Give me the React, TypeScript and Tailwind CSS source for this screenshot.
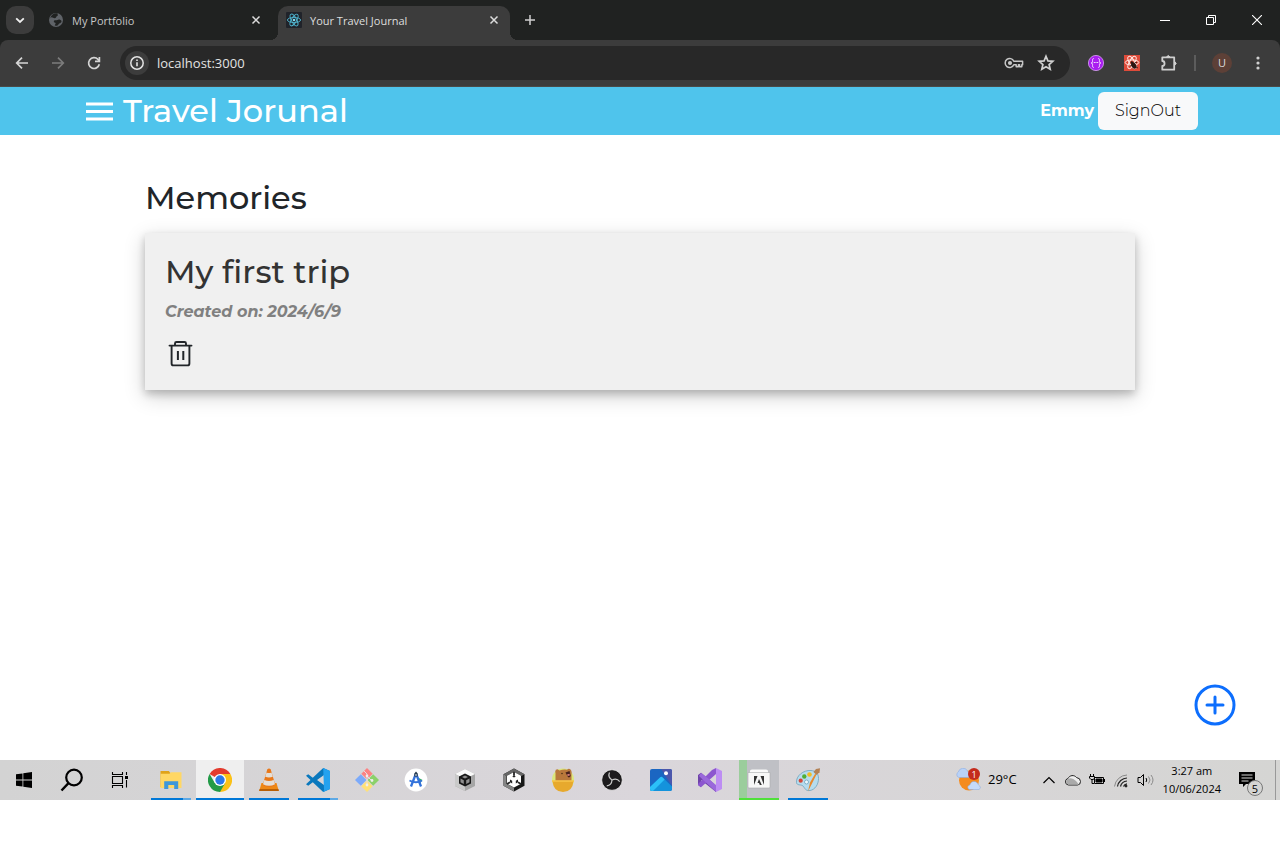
import React from "react";

type IconProps = { className?: string };

const GlobeIcon = () => (
  <svg viewBox="0 0 16 16" className="size-4 shrink-0">
    <circle cx="8" cy="8" r="7" fill="#5f6368" />
    <path d="M2.2 6.2C4 4 5 6.500 7 6.200 8.500 6 8 4.200 9.600 3.800 10.500 3.500 9 2 9.800 1.400A7 7 0 0 0 2.200 6.200ZM7.500 8.300c2 0 2.400-1.200 4-.8s2.500 1.600 1.800 2.800-2 .6-2.600 1.700-1.700 2.500-3.700 1.500c-.8-.5 1-1.500.6-2.500-.3-.8-1.800-.3-1.800-1.300s.7-1.400 1.700-1.400Z" fill="#202221" />
  </svg>
);

const ReactIcon = () => (
  <svg viewBox="0 0 16 16" className="size-4 shrink-0">
    <rect width="16" height="16" rx="1" fill="#20232a" />
    <g fill="none" stroke="#4fb5cf" strokeWidth="0.900">
      <ellipse cx="8" cy="8" rx="6.600" ry="2.600" />
      <ellipse cx="8" cy="8" rx="6.600" ry="2.600" transform="rotate(60 8 8)" />
      <ellipse cx="8" cy="8" rx="6.600" ry="2.600" transform="rotate(120 8 8)" />
    </g>
    <circle cx="8" cy="8" r="1.300" fill="#7fdcf2" />
  </svg>
);

const CloseIcon = () => (
  <svg viewBox="0 0 16 16" className="size-4" fill="none" stroke="#dcdcdc" strokeWidth="1.500">
    <path d="M4.500 4.500l7 7M11.500 4.500l-7 7" />
  </svg>
);

const ArrowIcon = ({ className = "" }: IconProps) => (
  <svg viewBox="0 0 16 16" className={"size-4 " + className} fill="none" stroke="currentColor" strokeWidth="1.700">
    <path d="M14 8H3M8 2.700L2.700 8L8 13.300" />
  </svg>
);

const ReloadIcon = () => (
  <svg viewBox="0 0 16 16" className="size-4" fill="none" stroke="#d4d4d4" strokeWidth="1.700">
    <path d="M13.300 9.200A5.400 5.400 0 1 1 12 4.400l1.300 1.400" />
    <path d="M13.400 2v4.400H9" />
  </svg>
);

const InfoIcon = () => (
  <svg viewBox="0 0 16 16" className="size-4">
    <circle cx="8" cy="8" r="6.200" fill="none" stroke="#e3e3e3" strokeWidth="1.500" />
    <path d="M7.200 7.200h1.600v4H7.200zM7.200 4.600h1.600v1.500H7.200z" fill="#e3e3e3" />
  </svg>
);

const KeyIcon = () => (
  <svg viewBox="0 0 20 16" className="h-4 w-5" fill="none" stroke="#c7c7c7" strokeWidth="1.500">
    <path d="M9.800 6.200A4.500 4.500 0 1 0 9.800 9.800h2.400v2h2.200v-2h1.200v2h2.200V9.800h.8V6.200Z" strokeLinejoin="round" />
    <circle cx="6" cy="8" r="1.300" fill="#c7c7c7" />
  </svg>
);

const StarIcon = () => (
  <svg viewBox="0 0 18 18" className="size-[18px]" fill="none" stroke="#d0d0d0" strokeWidth="1.700">
    <path d="M9 2.300l1.900 4.600 4.900.4-3.700 3.200 1.100 4.800L9 12.700l-4.200 2.600 1.100-4.800-3.700-3.200 4.900-.4Z" />
  </svg>
);

const BracesIcon = () => (
  <svg viewBox="0 0 16 16" className="size-4">
    <circle cx="8" cy="8" r="7.600" fill="#a91ef0" stroke="#d9a5f5" strokeWidth="0.800" />
    <g fill="none" stroke="#f3d9ff" strokeWidth="1">
      <path d="M5.800 3.600C4 3.600 4.600 5 4.600 6.200S4.200 8 3 8c1.200 0 1.600.6 1.600 1.800s-.6 2.600 1.200 2.600M10.200 3.600C12 3.600 11.400 5 11.400 6.200S11.800 8 13 8c-1.200 0-1.600.6-1.600 1.800s.6 2.600-1.200 2.600" />
    </g>
    <path d="M5.800 7h1v1h-1zM7.500 7h1v1h-1zM9.200 7h1v1h-1z" fill="#fff" />
  </svg>
);

const BugExtensionIcon = () => (
  <svg viewBox="0 0 16 16" className="size-4">
    <rect width="16" height="16" fill="#de4b3a" />
    <g fill="none" stroke="#ffe9e4" strokeWidth="1">
      <ellipse cx="8" cy="7.500" rx="6.800" ry="2.600" />
      <ellipse cx="8" cy="7.500" rx="6.800" ry="2.600" transform="rotate(60 8 7.500)" />
      <ellipse cx="8" cy="7.500" rx="6.800" ry="2.600" transform="rotate(120 8 7.500)" />
    </g>
    <ellipse cx="9.800" cy="10.500" rx="2.300" ry="3.400" fill="#2b1512" transform="rotate(-30 9.800 10.500)" />
    <circle cx="7.800" cy="7.500" r="1.200" fill="#2b1512" />
    <path d="M5.800 11l3-1M11 7.500l2 0M12 12l2 1" stroke="#2b1512" strokeWidth="0.800" />
  </svg>
);

const PuzzleIcon = () => (
  <svg viewBox="0 0 18 18" className="size-[18px]" fill="none" stroke="#cfcfcf" strokeWidth="1.800" strokeLinejoin="round">
    <path d="M2.300 3.300H14.200V15.700H2.300V12C5.300 12 5.300 7 2.300 7Z" />
    <path d="M6.500 3q1.800-3 3.600 0ZM14.700 7.600q3 1.800 0 3.600Z" fill="#cfcfcf" strokeWidth="1" />
  </svg>
);

const TrashIcon = () => (
  <svg viewBox="0 0 32 32" className="size-8" fill="none" stroke="#212529" strokeWidth="1.900">
    <path d="M4.500 7.600h22" strokeLinecap="round" />
    <path d="M10 7V5.500Q10 4 11.500 4h8Q21 4 21 5.500V7" />
    <path d="M6.600 7.600V25.500Q6.600 27.400 8.500 27.400h14Q24.400 27.400 24.400 25.500V7.600" />
    <path d="M12.900 13v9M18.300 13v9" strokeWidth="2" />
  </svg>
);

const WindowsIcon = () => (
  <svg viewBox="0 0 24 24" className="size-6" fill="#000">
    <path d="M4 6.300l6.500-.9v6.200H4zM11.300 5.300L20 4.100v7.500h-8.700zM4 12.400h6.500v6.200L4 17.700zM11.300 12.400H20v7.500l-8.700-1.200z" />
  </svg>
);

const SearchIcon = () => (
  <svg viewBox="0 0 24 24" className="size-6" fill="none" stroke="#000" strokeWidth="2.200">
    <circle cx="14" cy="9.500" r="7.800" />
    <path d="M8.500 15.200L1.500 22.500" strokeWidth="2.400" />
  </svg>
);

const TaskViewIcon = () => (
  <svg viewBox="0 0 24 24" className="size-6" fill="none" stroke="#000" strokeWidth="1.100">
    <path d="M4.500 8.500h10v7h-10zM4.500 4v2.500h10V4M4.500 20v-2.500h10V20M18.500 4v3M18.500 12v7.500" />
    <path d="M17 8h3v3h-3z" fill="#000" stroke="none" />
  </svg>
);

const FolderIcon = () => (
  <svg viewBox="0 0 24 24" className="size-6">
    <path d="M1.500 3h8.300l1.600 2H22v14H1.500z" fill="#e0a31a" />
    <path d="M1.500 5.700h9l1.400-1.500H22.500V20h-21z" fill="#ffd765" />
    <path d="M5.200 21v-7.800h14V21h-4v-4H9.300v4z" fill="#3e97da" />
  </svg>
);

const ChromeIcon = () => (
  <svg viewBox="0 0 24 24" className="size-6">
    <path d="M12 12L1.600 6A12 12 0 0 1 22.400 6Z" fill="#e33b2e" />
    <path d="M12 12V6H22.400A12 12 0 0 1 12 24Z" fill="#fbc116" />
    <path d="M12 12L17.200 15 12 24A12 12 0 0 1 1.600 6L6.800 15Z" fill="#239b48" />
    <circle cx="12" cy="12" r="6" fill="#fff" />
    <circle cx="12" cy="12" r="4.700" fill="#2c78e8" />
  </svg>
);

const ConeIcon = () => (
  <svg viewBox="0 0 24 24" className="size-6">
    <path d="M4.500 15h15l2.300 8H2.200z" fill="#ee8815" />
    <path d="M2.600 21h18.800l.4 2H2.200z" fill="#b85f05" />
    <path d="M10.300 1.200Q12-.2 13.700 1.200L18.300 17Q12 21 5.700 17z" fill="#e9781a" />
    <path d="M9.500 4.500q2.500 1 5 0l1.300 4.200q-3.800 1.500-7.600 0zM7.300 12q4.700 2 9.400 0l1.300 4.200q-6 3-12 0z" fill="#e4dfd8" />
  </svg>
);

const CodeIcon = () => (
  <svg viewBox="0 0 24 24" className="size-6">
    <path d="M17.200 0L24 3v18l-6.800 3L6.800 14.200 2.200 17.700 0 16.300 4.500 12 0 7.700 2.200 6.300 6.800 9.800zM18 7L11 12l7 5z" fill="#0a78bd" fillRule="evenodd" />
    <path d="M17.200 0L24 3v18l-6.800 3 .8-2z" fill="#24a2ef" />
  </svg>
);

const GitIcon = () => (
  <svg viewBox="0 0 24 24" className="size-6">
    <path d="M12 0l5.700 5.700L12 11.300 6.300 5.700z" fill="#fc8283" />
    <path d="M18.200 6.200L24 12l-5.800 5.800L12.500 12z" fill="#8bd16a" />
    <path d="M5.800 6.200L11.500 12l-5.700 5.800L0 12z" fill="#7caafa" />
    <path d="M12 12.600l5.700 5.700L12 24l-5.700-5.700z" fill="#ffe177" />
    <path d="M8.500 2.500L12 6v12M12 8l5 5" stroke="#e2dfe2" strokeWidth="1" fill="none" />
    <circle cx="12" cy="8" r="1.400" fill="#eee" />
    <circle cx="17" cy="12.500" r="1.400" fill="#eee" />
    <circle cx="12" cy="17" r="1.400" fill="#eee" />
  </svg>
);

const AndroidStudioIcon = () => (
  <svg viewBox="0 0 24 24" className="size-6">
    <circle cx="12" cy="12" r="11.400" fill="#fff" />
    <path d="M14 9.500l4.500 2.500-2.500 3.500z" fill="#30ae65" />
    <path d="M11.600 6.500L7 18.500M12.400 6.500L17 18.500" stroke="#3372db" strokeWidth="2.300" />
    <path d="M5.500 12.500q6.500 3.500 12.500 0" stroke="#3372db" strokeWidth="1.800" fill="none" />
    <path d="M10.300 8.500V5.500L12 3.500l1.700 2v3z" fill="#263b50" />
    <circle cx="12" cy="7" r="0.800" fill="#fff" />
  </svg>
);

const CubeHubIcon = () => (
  <svg viewBox="0 0 24 24" className="size-6">
    <path d="M12 1l10 5v12l-10 5L2 18V6z" fill="#a6a6a6" />
    <path d="M12 1l10 5-10 5L2 6z" fill="#fafafa" />
    <path d="M2 6l10 5v12L2 18z" fill="#c9c9c9" />
    <path d="M12 5.500l6 3v7l-6 3-6-3v-7z" fill="#181818" />
    <path d="M12 10.500L9 9l3-1.500L15 9zM7.500 10.500l3.300 1.700v3.800l-3.300-1.700zM16.500 10.500l-3.300 1.700v3.800l3.300-1.700z" fill="#8f8f8f" />
  </svg>
);

const CubeIcon = () => (
  <svg viewBox="0 0 24 24" className="size-6">
    <path d="M12 .5l10.500 5.700v11.600L12 23.500 1.500 17.800V6.200z" fill="#171717" />
    <path d="M1.500 6.200L12 .5l10.500 5.700-3 1.700-7.500-4-7.500 4z" fill="#666" />
    <path d="M1.500 6.200l3 1.700v7.800l7.500 4v3.800L1.500 17.800z" fill="#858585" />
    <path d="M12 4l7 3.800v7.900L12 19.500l-7-3.800V7.800z" fill="#fff" />
    <path d="M12 3.800v4M5 16l3-1.700M19 16l-3-1.700" stroke="#252525" strokeWidth="1.800" fill="none" />
    <path d="M12 7.500l1.800 1L12 9.500l-1.800-1zM8 11.500l2.200 1.200v2.800L8 14.300zM16 11.500l-2.200 1.200v2.800l2.200-1.200z" fill="#252525" />
  </svg>
);

const BearIcon = () => (
  <svg viewBox="0 0 24 24" className="size-6">
    <circle cx="12" cy="11.500" r="11" fill="#dbe77c" />
    <path d="M4.500 14V5Q3.500 1.500 6.500 1.300L8.500 2.500q4-1.500 7.500-.8Q18-.3 19.500 1.500 21 3 20.500 6v8z" fill="#b9783b" />
    <circle cx="11" cy="5.500" r="0.700" fill="#35210e" />
    <path d="M14.500 4.500l4-1.500 1.200 5q-1.500 2.500-3 .5z" fill="#47201c" />
    <path d="M16 6.500l2.500-.8.4 1.800-2.200.6z" fill="#d9837c" />
    <path d="M1.500 13h21Q21.500 24 12 24T1.500 13z" fill="#e7a92d" />
    <path d="M1 12.200h22v1.600H1z" fill="#f6c449" />
  </svg>
);

const ObsIcon = () => (
  <svg viewBox="0 0 24 24" className="size-6">
    <circle cx="12" cy="12" r="10.300" fill="#1d1b1d" stroke="#f0f0f0" strokeWidth="0.700" />
    <g fill="none" stroke="#c9c9c9" strokeWidth="1.200">
      <path d="M12 12Q7.500 9 9.500 4.500" />
      <path d="M12 12Q7.500 9 9.500 4.500" transform="rotate(120 12 12)" />
      <path d="M12 12Q7.500 9 9.500 4.500" transform="rotate(240 12 12)" />
    </g>
  </svg>
);

const PhotosIcon = () => (
  <svg viewBox="0 0 24 24" className="size-6">
    <rect x="1" y="1" width="22" height="22" rx="2" fill="#1b66c2" />
    <path d="M12 1h9q2 0 2 2v15z" fill="#4c57ac" />
    <path d="M1 19L11 9.500q1.300-1.300 2.600 0L23 18.500V21q0 2-2 2H3q-2 0-2-2z" fill="#1493dc" />
    <path d="M1 19L11 9.500q1.300-1.300 2.600 0l2 2L4 23H3q-2 0-2-2z" fill="#2cc0f8" />
    <circle cx="17" cy="5.200" r="2" fill="#fff" />
  </svg>
);

const VisualStudioIcon = () => (
  <svg viewBox="0 0 24 24" className="size-6">
    <path d="M0 7l3-2.300L13 13l5 5.500V24L3 12v7.300L0 17z" fill="#6f43a9" />
    <path d="M18 0v6L3 19.300 0 17v-1L14 2z" fill="#8c56cf" />
    <path d="M18 0l6 3v18l-6 3z" fill="#bd8df3" />
    <path d="M3 4.700l4.500 3.500L18 17v7L1 8z" fill="#9a68db" />
  </svg>
);

const ArchiveIcon = () => (
  <svg viewBox="0 0 24 24" className="size-6">
    <path d="M3 3Q3 1.500 5 1.500h14Q21 1.500 21 3v2H3z" fill="#fafafa" />
    <path d="M1 4.500h22V19q0 1-1 1H2q-1 0-1-1z" fill="#f7f7f7" stroke="#a8a9ab" strokeWidth="0.600" />
    <path d="M7 8h3.500L7 17zM13.500 8H17v9zM12 11l2.800 6h-2l-.8-2h-1.500z" fill="#333" />
  </svg>
);

const PaletteIcon = () => (
  <svg viewBox="0 0 24 24" className="size-6">
    <path d="M15 2.500C7 2 0 8 .5 14.500 1 18 5 16 7 18s2 5 7 4.500c5-.8 8.500-6 8.500-12S19 3 15 2.500z" fill="#b6dcee" stroke="#6ca2bd" strokeWidth="0.800" />
    <circle cx="8.300" cy="8.500" r="2.200" fill="#50af35" />
    <circle cx="13.500" cy="6.500" r="2.300" fill="#f2bb23" />
    <circle cx="4.700" cy="12.700" r="2.100" fill="#d54837" />
    <circle cx="10.500" cy="14" r="2" fill="#eff8fc" stroke="#6ca2bd" strokeWidth="0.800" />
    <path d="M20.500 6.500L12 23.500l2-9 5-8.500z" fill="#e8892d" />
    <path d="M17.500 4L20 1l4-.8-.5 4L20.500 7z" fill="#b38155" />
  </svg>
);

const WeatherIcon = () => (
  <svg viewBox="0 0 26 24" className="h-6 w-[26px]">
    <circle cx="13" cy="12.500" r="10" fill="#f58b1e" />
    <path d="M3 9.500a3 3 0 0 1-.7-5.500 5 5 0 0 1 9-1.500q3.500 2.500 1.200 7z" fill="#b9d2f8" stroke="#82a6de" strokeWidth="0.500" />
    <path d="M13 21.500q-3-3 1-4.800 1.500-4.200 5.500-3 2.500 1 3 3.300 3.500 2.500.5 4.500z" fill="#c5daf9" stroke="#82a6de" strokeWidth="0.500" />
  </svg>
);

type TaskApp = {
  name: string;
  Icon: () => React.ReactElement;
  state?: "open" | "stacked" | "active" | "busy";
};

const taskApps: TaskApp[] = [
  { name: "File Explorer", Icon: FolderIcon, state: "stacked" },
  { name: "Google Chrome", Icon: ChromeIcon, state: "active" },
  { name: "VLC", Icon: ConeIcon, state: "open" },
  { name: "Visual Studio Code", Icon: CodeIcon, state: "stacked" },
  { name: "Git", Icon: GitIcon },
  { name: "Android Studio", Icon: AndroidStudioIcon },
  { name: "Unity Hub", Icon: CubeHubIcon },
  { name: "Unity", Icon: CubeIcon },
  { name: "TunnelBear", Icon: BearIcon },
  { name: "OBS Studio", Icon: ObsIcon },
  { name: "Photos", Icon: PhotosIcon },
  { name: "Visual Studio", Icon: VisualStudioIcon },
  { name: "Adobe Installer", Icon: ArchiveIcon, state: "busy" },
  { name: "Paint", Icon: PaletteIcon, state: "open" },
];

function TaskButton({ name, Icon, state }: TaskApp) {
  const frame = state === "active" ? "w-12 bg-[#efefef]" : state === "busy" ? "w-10 bg-linear-to-r from-[#9bcd9c] from-20% to-[#bfc0c5] to-20%" : "w-10";
  return (
    <span className="flex w-12 justify-center">
      <button aria-label={name} className={"flex h-10 flex-col items-center " + frame}>
        <span className="flex h-[38px] items-center pt-0.5">
          <Icon />
        </span>
        {state && (
          <span className={"flex h-0.5 w-full justify-end " + (state === "busy" ? "bg-[#4fe03a]" : "bg-[#0078d7]")}>
            {state === "stacked" && <span className="w-2 bg-[#5ea9e5]" />}
          </span>
        )}
      </button>
    </span>
  );
}

function BrowserChrome() {
  return (
    <header className="bg-[#202221] font-['Open_Sans','Noto_Sans',sans-serif] text-[11px] text-[#dedede]">
      <div className="flex h-10 items-start">
        <button aria-label="Search tabs" className="mt-1.5 ml-1.5 grid size-7 place-items-center rounded-[10px] bg-[#3c3c3c]">
          <svg viewBox="0 0 12 12" className="size-3" fill="none" stroke="#f0f0f0" strokeWidth="1.800">
            <path d="M2.200 4.300L6 8l3.800-3.700" />
          </svg>
        </button>
        <div className="flex h-10 w-[236px] items-center gap-2 pr-1.5 pl-3.5">
          <GlobeIcon />
          <span className="flex-1 pt-0.5 text-[#c7c7c7]">My Portfolio</span>
          <button aria-label="Close My Portfolio"><CloseIcon /></button>
        </div>
        <div className="flex self-end">
          <span className="size-2 self-end bg-[radial-gradient(circle_at_0_0,#202221_8px,#3c3c3c_8px)]" />
          <div className="flex h-[34px] w-[232px] items-center gap-2 rounded-t-[10px] bg-[#3c3c3c] pr-2 pb-1.5 pl-2">
            <ReactIcon />
            <span className="flex-1 pt-0.5">Your Travel Journal</span>
            <button aria-label="Close Your Travel Journal"><CloseIcon /></button>
          </div>
          <span className="size-2 self-end bg-[radial-gradient(circle_at_100%_0,#202221_8px,#3c3c3c_8px)]" />
        </div>
        <button aria-label="New tab" className="ml-1 grid h-10 w-4 place-items-center">
          <svg viewBox="0 0 16 16" className="size-4" stroke="#cfcfcf" strokeWidth="1.500">
            <path d="M8 3v10M3 8h10" />
          </svg>
        </button>
        <div className="ml-auto flex h-10">
          <button aria-label="Minimize" className="grid w-[46px] place-items-center">
            <svg viewBox="0 0 10 10" className="size-2.5" stroke="#fff"><path d="M0 5.500h10" /></svg>
          </button>
          <button aria-label="Restore" className="grid w-[46px] place-items-center">
            <svg viewBox="0 0 10 10" className="size-2.5" fill="none" stroke="#fff"><path d="M.5 2.500h7v7h-7zM2.500 2.500v-2h7v7h-2" /></svg>
          </button>
          <button aria-label="Close window" className="grid w-[46px] place-items-center">
            <svg viewBox="0 0 10 10" className="size-2.5" stroke="#fff" strokeWidth="1.100"><path d="M0 0l10 10M10 0L0 10" /></svg>
          </button>
        </div>
      </div>
      <div className="flex h-[47px] items-center rounded-t-lg border-b border-[#4a4a48] bg-[#3c3c3c] pl-3.5">
        <div className="flex gap-5">
          <button aria-label="Back" className="text-[#d6d6d6]"><ArrowIcon /></button>
          <button aria-label="Forward" className="text-[#7c7c7c]"><ArrowIcon className="rotate-180" /></button>
          <button aria-label="Reload"><ReloadIcon /></button>
        </div>
        <div className="ml-[18px] flex h-[34px] flex-1 items-center rounded-full bg-[#282828] pr-[15px] pl-[5px]">
          <button aria-label="Site information" className="grid size-6 place-items-center rounded-full bg-[#3c3c3c]"><InfoIcon /></button>
          <input aria-label="Address" defaultValue="localhost:3000" className="ml-2 min-w-0 flex-1 bg-transparent pt-0.5 text-[13px] text-[#e3e3e3] outline-none" />
          <button aria-label="Passwords"><KeyIcon /></button>
          <button aria-label="Bookmark" className="ml-[13px]"><StarIcon /></button>
        </div>
        <div className="flex items-center pr-3.5 pl-[18px]">
          <button aria-label="API extension"><BracesIcon /></button>
          <button aria-label="React debug extension" className="ml-5"><BugExtensionIcon /></button>
          <button aria-label="Extensions" className="ml-5"><PuzzleIcon /></button>
          <span className="ml-4 h-4 w-0.5 bg-[#5c5c5c]" />
          <button aria-label="Profile" className="ml-4 grid size-5 place-items-center rounded-full bg-[#5d4037] text-[11px]">U</button>
          <button aria-label="Menu" className="ml-[18px]">
            <svg viewBox="0 0 16 16" className="size-4" fill="#d0d0d0">
              <circle cx="8" cy="3" r="1.600" /><circle cx="8" cy="8" r="1.600" /><circle cx="8" cy="13" r="1.600" />
            </svg>
          </button>
        </div>
      </div>
    </header>
  );
}

function Journal() {
  return (
    <div className="flex flex-1 flex-col font-[Montserrat,Inter,sans-serif] text-[#212529]">
      <nav className="flex h-12 items-center bg-[#4fc4ec] pr-[82px] pl-[84px] text-white">
        <button aria-label="Open menu">
          <svg viewBox="0 0 32 32" className="size-8" fill="#fff">
            <path d="M2 7.500h27v2.900H2zM2 15h27v2.900H2zM2 22.500h27v2.900H2z" />
          </svg>
        </button>
        <a href="#" className="ml-[7px] text-[32px] leading-10 font-medium">Travel Jorunal</a>
        <span className="ml-auto text-base font-bold">Emmy</span>
        <button className="ml-1 h-[38px] w-[100px] rounded-md bg-[#f8f9fa] text-base font-light text-black">SignOut</button>
      </nav>
      <main className="flex min-h-[625px] flex-1 flex-col px-[145px] pt-11">
        <h1 className="text-[32px] leading-[38px] font-medium">Memories</h1>
        <article className="mt-4 bg-[#f0f0f0] px-5 py-5 shadow-[0_4px_8px_rgba(0,0,0,0.2),0_6px_20px_rgba(0,0,0,0.19)]">
          <h2 className="text-[32px] leading-[38px] font-medium text-[#333]">My first trip</h2>
          <p className="mt-[9px] text-base leading-6 font-bold text-[#808080] italic">Created on: 2024/6/9</p>
          <button aria-label="Delete memory" className="mt-3.5 block"><TrashIcon /></button>
        </article>
        <button aria-label="Add memory" className="mt-auto -mr-[101px] mb-[34px] self-end">
          <svg viewBox="0 0 42 42" className="size-[42px]" fill="none" stroke="#0d6efd" strokeWidth="3">
            <circle cx="21" cy="21" r="19" />
            <path d="M21 13v16M13 21h16" strokeLinecap="round" />
          </svg>
        </button>
      </main>
    </div>
  );
}

function Taskbar() {
  return (
    <footer className="flex h-10 items-center bg-linear-to-r from-[#d3d3d3] via-[#dad6db] to-[#d5d5d3] font-['Open_Sans','Noto_Sans',sans-serif] text-xs text-black">
      <button aria-label="Start" className="grid w-12 place-items-center"><WindowsIcon /></button>
      <button aria-label="Search" className="grid w-12 place-items-center"><SearchIcon /></button>
      <button aria-label="Task view" className="grid w-12 place-items-center"><TaskViewIcon /></button>
      <div className="ml-[3px] flex gap-px">
        {taskApps.map((app) => <TaskButton key={app.name} {...app} />)}
      </div>
      <button className="ml-auto flex items-center gap-1.5">
        <span className="relative">
          <WeatherIcon />
          <span className="absolute top-0 right-0.5 grid size-3 place-items-center rounded-full bg-[#c42b1c] text-[9px] leading-none text-white">1</span>
        </span>
        <span className="text-[13px]">29°C</span>
      </button>
      <div className="ml-6 flex items-center gap-2">
        <button aria-label="Show hidden icons">
          <svg viewBox="0 0 16 16" className="size-4" fill="none" stroke="#000" strokeWidth="1.200"><path d="M2.500 11L8 5.500 13.500 11" /></svg>
        </button>
        <svg viewBox="0 0 16 16" className="size-4" stroke="#222">
          <path d="M3.500 13a3.300 3.300 0 0 1-.5-6.500A5 5 0 0 1 11.500 5.500q4 .6 4 4t-3 3.500z" fill="#eee" />
          <path d="M3 7Q7 5 11 9l3 3.500H4Q1 12 1 9.500z" fill="#aaa" stroke="none" />
        </svg>
        <svg viewBox="0 0 16 16" className="size-4" fill="none" stroke="#000">
          <path d="M5.500 5.500h9v6h-9zM15.500 7v3M1.500 2v3M4.500 2v3M.5 4.500h5v2l-1.500 1H2L.5 6zM3 7v4.500h2" />
          <path d="M7 7h6v3H7z" fill="#000" />
        </svg>
        <svg viewBox="0 0 16 16" className="size-4" fill="none" stroke="#222">
          <path d="M1.500 14.500A13 13 0 0 1 14 3" stroke="#888" />
          <path d="M4.500 14.500A10 10 0 0 1 14 6M7.500 14.500A7 7 0 0 1 14 9M10.500 14.500A4 4 0 0 1 14 11.800" strokeWidth="1.200" />
          <circle cx="13" cy="14" r="1" fill="#000" />
        </svg>
        <svg viewBox="0 0 18 16" className="h-4 w-[18px]" fill="none" stroke="#000">
          <path d="M1 5.500h2.500l3-3v11l-3-3H1zM9 6q1.500 2 0 4" />
          <path d="M11.500 4.500q3 3.500 0 7M14 3q4 5 0 10" stroke="#8a8a8a" />
        </svg>
      </div>
      <time className="ml-2 text-center text-[11px] leading-[18px]">3:27 am<br />10/06/2024</time>
      <button aria-label="Notifications" className="relative ml-4 h-6 w-6">
        <svg viewBox="0 0 24 24" className="size-6">
          <path d="M2 4h16v12H9l-3 3v-3H2z" fill="#000" />
          <path d="M4.500 7h11M4.500 10h11M4.500 13h7" stroke="#d5d5d3" />
        </svg>
        <span className="absolute top-3 left-2.5 grid size-4 place-items-center rounded-full border border-[#777] bg-[#d5d5d3] text-[11px] leading-none">5</span>
      </button>
      <span className="mr-1 ml-3.5 h-full w-px bg-[#999]" />
    </footer>
  );
}

export default function App() {
  return (
    <div className="flex min-h-[800px] flex-col bg-white pr-0.5">
      <BrowserChrome />
      <Journal />
      <Taskbar />
    </div>
  );
}
